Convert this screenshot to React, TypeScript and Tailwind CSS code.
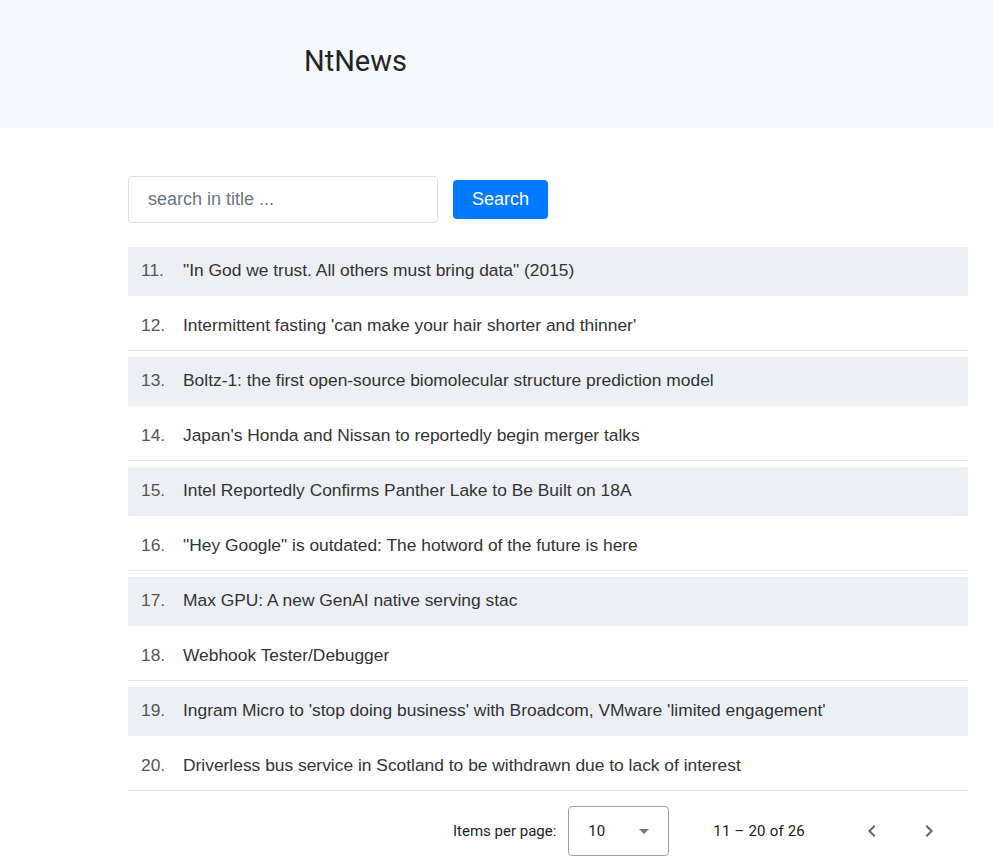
import { useState } from "react";

interface Story {
  rank: number;
  title: string;
}

const stories: Story[] = [
  { rank: 11, title: "\"In God we trust. All others must bring data\" (2015)" },
  { rank: 12, title: "Intermittent fasting 'can make your hair shorter and thinner'" },
  { rank: 13, title: "Boltz-1: the first open-source biomolecular structure prediction model" },
  { rank: 14, title: "Japan's Honda and Nissan to reportedly begin merger talks" },
  { rank: 15, title: "Intel Reportedly Confirms Panther Lake to Be Built on 18A" },
  { rank: 16, title: "\"Hey Google\" is outdated: The hotword of the future is here" },
  { rank: 17, title: "Max GPU: A new GenAI native serving stac" },
  { rank: 18, title: "Webhook Tester/Debugger" },
  { rank: 19, title: "Ingram Micro to 'stop doing business' with Broadcom, VMware 'limited engagement'" },
  { rank: 20, title: "Driverless bus service in Scotland to be withdrawn due to lack of interest" },
];

export default function App() {
  const [search, setSearch] = useState("");

  return (
    <div className="min-h-[866px] bg-white font-['Liberation_Sans',Arial,sans-serif]">
      {/* HEADER */}
      <header className="h-[128px] bg-[#f8f9fa] flex items-center pl-[304px] pb-[6px]">
        <h1 className="font-['Roboto',sans-serif] text-[29px] text-[#212529] leading-none">
          NtNews
        </h1>
      </header>

      <main className="ml-[128px] w-[840px] pt-[48px]">
        {/* SEARCH BAR */}
        <div className="flex items-center gap-[15px]">
          <input
            type="text"
            placeholder="search in title ..."
            value={search}
            onChange={(e) => setSearch(e.target.value)}
            className="w-[310px] h-[47px] border border-[#dcdfe3] rounded-[4px] px-[19px] text-[18px] text-[#495057] placeholder:text-[#6c757d] outline-none"
          />
          <button className="h-[39px] px-[19px] bg-[#007bff] text-white text-[18px] rounded-[4px]">
            Search
          </button>
        </div>

        {/* LIST */}
        <ul className="mt-[24px]">
          {stories.map((s, i) => (
            <li
              key={s.rank}
              className={
                "h-[49px] mb-[6px] pb-[2px] flex items-center border-b text-[17.4px] " +
                (i % 2 === 0
                  ? "bg-[#ecf0f4] border-[#ecf0f4]"
                  : "bg-white border-[#e6e8ea]")
              }
            >
              <span className="w-[55px] pl-[13px] text-[#555]">{s.rank}.</span>
              <span className="text-[#333]">{s.title}</span>
            </li>
          ))}
        </ul>

        {/* PAGINATION */}
        <div className="flex items-center justify-end pr-[19px] pt-[9px] font-['Roboto',sans-serif] text-[15px] text-[#222]">
          <span>Items per page:</span>
          <div className="ml-[12px] w-[101px] h-[50px] border border-[#a0a0a0] rounded-[4px] flex items-center justify-between pl-[19px] pr-[19px]">
            <span className="text-[#222]">10</span>
            <span className="w-0 h-0 border-l-[5px] border-r-[5px] border-t-[5px] border-l-transparent border-r-transparent border-t-[#757575]" />
          </div>
          <span className="ml-[44px] tracking-[0.2px]">11 – 20 of 26</span>
          <button className="ml-[47px] w-[40px] h-[40px] flex items-center justify-center text-[#666]">
            <svg width="24" height="24" viewBox="0 0 24 24" fill="currentColor">
              <path d="M15.41 7.41 14 6l-6 6 6 6 1.41-1.41L10.83 12z" />
            </svg>
          </button>
          <button className="ml-[17px] w-[40px] h-[40px] flex items-center justify-center text-[#666]">
            <svg width="24" height="24" viewBox="0 0 24 24" fill="currentColor">
              <path d="M10 6 8.59 7.41 13.17 12l-4.58 4.59L10 18l6-6z" />
            </svg>
          </button>
        </div>
      </main>
    </div>
  );
}
